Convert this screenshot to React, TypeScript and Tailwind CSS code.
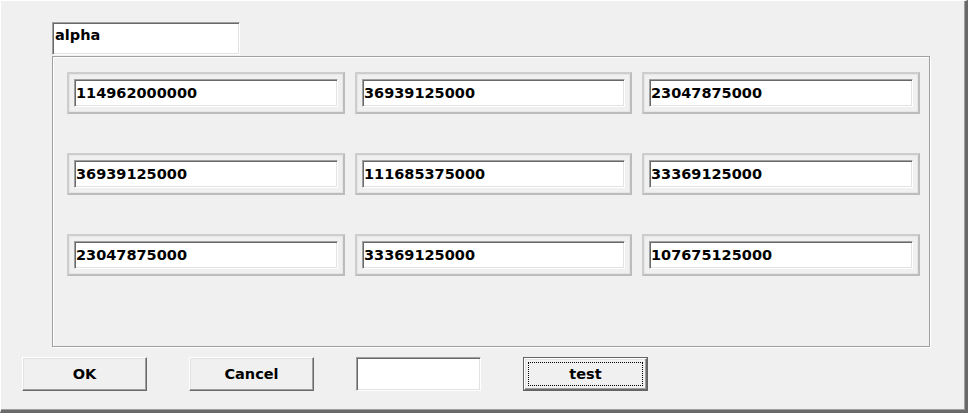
const values = [
  ["114962000000", "36939125000", "23047875000"],
  ["36939125000", "111685375000", "33369125000"],
  ["23047875000", "33369125000", "107675125000"],
];

const font = "font-['DejaVu_Sans',sans-serif] font-bold text-[14.5px] text-black";

const sunken =
  "bg-white border border-t-[#a0a0a0] border-l-[#a0a0a0] border-b-white border-r-white shadow-[inset_1px_1px_0_#696969,inset_-1px_-1px_0_#e3e3e3]";

const raised =
  "bg-[#f0f0f0] border border-t-white border-l-white border-b-[#696969] border-r-[#696969] shadow-[inset_-1px_-1px_0_#a0a0a0,inset_1px_1px_0_#e3e3e3]";

function Field({ value }: { value: string }) {
  return (
    <div className="border-2 border-t-[#cdcdcd] border-l-[#cdcdcd] border-b-[#bcbcbc] border-r-[#bcbcbc] p-[5px] h-[42px] shadow-[inset_1px_1px_0_#e6e6e6,inset_-1px_-1px_0_#e6e6e6]">
      <div className={`${sunken} h-[28px] flex items-center pl-[1px] ${font} leading-[16px]`}>
        {value}
      </div>
    </div>
  );
}

function Button({ label }: { label: string }) {
  return (
    <div className={`${raised} w-[125px] h-[34px] flex items-center justify-center ${font} leading-[16px]`}>
      {label}
    </div>
  );
}

export default function App() {
  return (
    <div className="w-[968px] h-[413px] bg-[#f0f0f0] flex flex-col pt-[21px] pl-[21px] border-t border-l border-t-white border-l-white border-r-[3px] border-b-[3px] border-r-[#696969] border-b-[#696969] shadow-[inset_-1px_-1px_0_#a0a0a0]">
      <div className={`${sunken} ml-[30px] w-[188px] h-[33px] pt-[4px] pl-[2px] ${font} leading-[16px]`}>
        alpha
      </div>

      <div className="ml-[30px] mt-[1px] w-[878px] h-[291px] border border-[#a0a0a0] shadow-[inset_1px_1px_0_white,1px_1px_0_white] pt-[15px] pl-[14px]">
        <div className="grid grid-cols-[278px_277px_278px] gap-x-[10px] gap-y-[39px]">
          {values.flat().map((v, i) => (
            <Field key={i} value={v} />
          ))}
        </div>
      </div>

      <div className="mt-[10px] flex gap-[42px]">
        <Button label="OK" />
        <Button label="Cancel" />
        <div className={`${sunken} w-[125px] h-[34px]`} />
        <div className="w-[125px] h-[34px] border border-[#646464]">
          <div className={`${raised} h-full p-[3px]`}>
            <div className={`h-full border border-dotted border-black flex items-center justify-center ${font} leading-[16px]`}>
              test
            </div>
          </div>
        </div>
      </div>
    </div>
  );
}
